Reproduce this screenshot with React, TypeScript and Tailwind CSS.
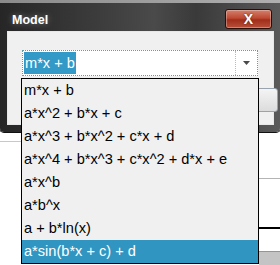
import React from "react";

const items = [
  "m*x + b",
  "a*x^2 + b*x + c",
  "a*x^3 + b*x^2 + c*x + d",
  "a*x^4 + b*x^3 + c*x^2 + d*x + e",
  "a*x^b",
  "a*b^x",
  "a + b*ln(x)",
  "a*sin(b*x + c) + d",
];

export default function App() {
  return (
    <div className="relative w-[280px] h-[265px] bg-white overflow-hidden font-['Liberation_Sans',Arial,sans-serif]">
      {/* backdrop of parent app */}
      <div className="flex h-full">
        <div className="w-[21px] pt-[141px]">
          <div className="h-px bg-[#c8c8c8]" />
        </div>
        <div className="flex-1" />
        <div className="w-[21px] flex flex-col pt-[178px]">
          <div className="h-px bg-[#b4b4b4]" />
          <div className="mt-[48px] h-[2px] bg-black" />
          <div className="mt-[22px] h-px bg-[#6fae7a]" />
          <div className="flex-1 bg-[#c4c4c4]" />
        </div>
      </div>

      {/* dialog window */}
      <div className="absolute left-0 top-0 w-[280px] h-[132px] rounded-b-[4px] bg-[linear-gradient(90deg,#262626_0%,#3c3c3c_35%,#4a4a4a_55%,#3a3a3a_70%,#5a5a5a_100%)] flex flex-col shadow-[0_0_0_1px_#111]">
        <div className="h-[3px] bg-[linear-gradient(90deg,#8a8a8a,#b0b0b0)]" />
        <div className="h-[28px] relative flex items-center pl-[12px]">
          <span className="text-white font-bold text-[12.5px] leading-none mt-[6px] [text-shadow:0_0_6px_rgba(255,255,255,0.35)]">
            Model
          </span>
          <div className="absolute left-[225px] top-[6px] w-[47px] h-[20px] rounded-[3px] border border-[#2a0e08] bg-[linear-gradient(180deg,#d4806c_0%,#be4a33_45%,#a02e1a_55%,#b9513a_100%)] flex items-center justify-center shadow-[inset_0_0_0_1px_rgba(255,255,255,0.3)]">
            <span className="text-white font-bold text-[14px] leading-none [text-shadow:0_0_2px_#5a1a0a]">X</span>
          </div>
        </div>
        <div className="ml-[7px] mr-[6px] h-[94px] bg-[#f0f0f0] border border-[#e8e8e8] pl-[14px] pt-[18px] flex flex-col">
          <div className="w-[236px] h-[26px] bg-white border border-dotted border-[#5b9fa8] flex items-stretch">
            <div className="flex-1 flex items-center pl-px">
              <span className="bg-[#3399c6] text-white text-[14.6px] leading-[22px] px-[1px] h-[22px]">m*x + b</span>
            </div>
            <div className="w-[22px] border-l border-dotted border-[#9fc7cc] flex items-center justify-center">
              <svg width="7" height="4" viewBox="0 0 7 4">
                <path d="M0 0 H7 L3.5 4 Z" fill="#4a4a4a" />
              </svg>
            </div>
          </div>
          <div className="flex justify-end mt-[12px]">
            <div className="w-[70px] h-[24px] rounded-[3px] border border-[#9aa4ae] bg-[linear-gradient(180deg,#f4f4f4,#dcdcdc)] mr-[-5px]" />
          </div>
        </div>
      </div>

      {/* dropdown list */}
      <div className="absolute left-[21px] top-[78px] w-[238px] h-[186px] border border-black bg-[#f0f0f0] flex flex-col">
        {items.map((t, i) => {
          const sel = i === items.length - 1;
          return (
            <div
              key={t}
              className={
                "h-[23px] flex items-center pl-[2px] text-[14.6px] whitespace-nowrap " +
                (sel ? "bg-[#3096c1] text-white" : "text-black")
              }
            >
              {t}
            </div>
          );
        })}
      </div>
    </div>
  );
}
